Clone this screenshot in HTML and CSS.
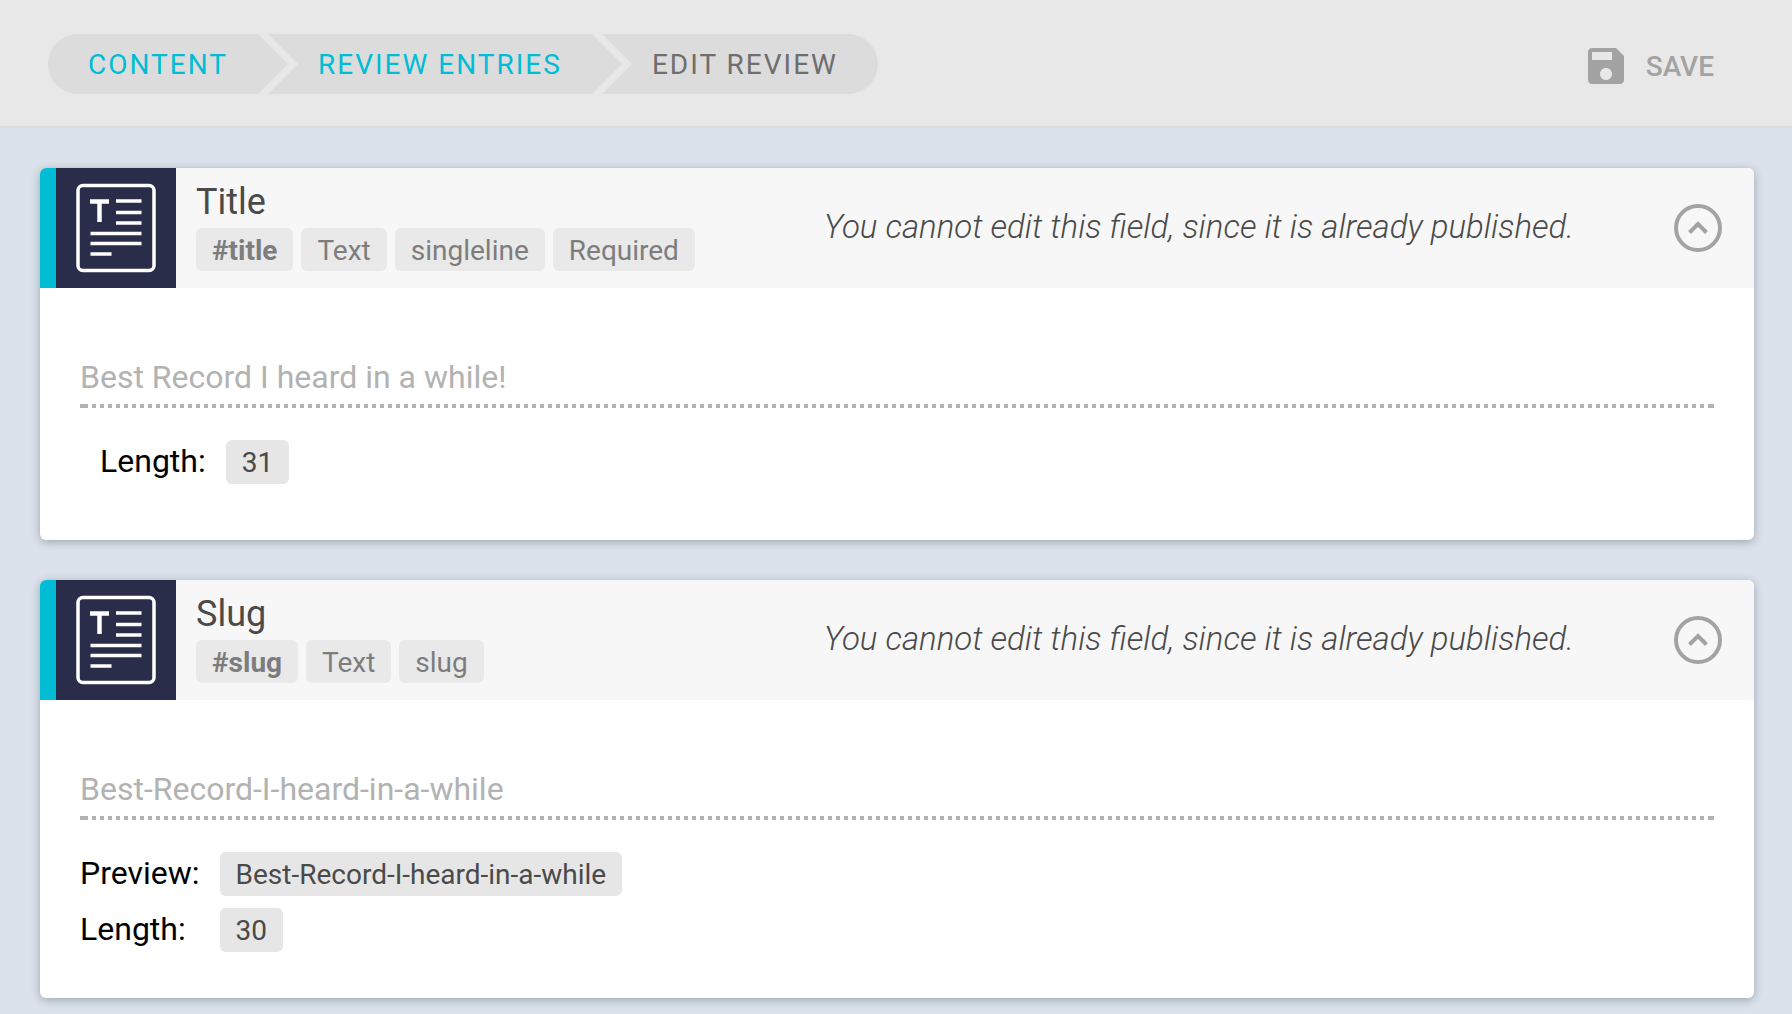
FILE: index.html
```html
<!DOCTYPE html>
<html lang="en">
<head>
<meta charset="utf-8">
<title>Edit Review</title>
<link rel="stylesheet" href="styles.css">
</head>
<body>
<svg class="sprite" aria-hidden="true">
  <symbol id="icon-text" viewBox="0 0 120 120">
    <rect x="22" y="17.5" width="76" height="85" rx="5" fill="none" stroke="#fff" stroke-width="3.5"/>
    <path d="M34 33.5h19M43.5 33v21" fill="none" stroke="#fff" stroke-width="4.5"/>
    <path d="M60 33h25.500M60 44.500h25.500M60 55h25.500M34.500 65.500h51M34.500 75.500h51M34.500 86h21" fill="none" stroke="#fff" stroke-width="3.500"/>
  </symbol>
  <symbol id="icon-chevron" viewBox="0 0 48 48">
    <circle cx="24" cy="24" r="22" fill="none" stroke="currentColor" stroke-width="4"/>
    <path d="M15.500 28.500L24 20l8.500 8.500" fill="none" stroke="currentColor" stroke-width="4"/>
  </symbol>
</svg>

<header class="topbar">
  <nav aria-label="Breadcrumb">
    <ol class="crumbs">
      <li class="crumb"><a href="#content">CONTENT</a></li>
      <li class="crumb"><a href="#entries">REVIEW ENTRIES</a></li>
      <li class="crumb" aria-current="page">EDIT REVIEW</li>
    </ol>
  </nav>
  <button class="save" type="button">
    <svg class="save-icon" viewBox="0 0 24 24" aria-hidden="true"><path fill="currentColor" d="M17 3H5c-1.110 0-2 .9-2 2v14c0 1.100.89 2 2 2h14c1.100 0 2-.9 2-2V7l-4-4zm-5 16c-1.660 0-3-1.340-3-3s1.340-3 3-3 3 1.340 3 3-1.340 3-3 3zm3-10H5V5h10v4z"/></svg>
    <span class="save-label">SAVE</span>
  </button>
</header>

<main class="fields">
  <section class="card">
    <div class="card-head">
      <div class="type"><svg viewBox="0 0 120 120" aria-hidden="true"><use href="#icon-text"/></svg></div>
      <div class="meta">
        <h2><label for="title">Title</label></h2>
        <ul class="tags">
          <li class="tag"><strong>#title</strong></li>
          <li class="tag">Text</li>
          <li class="tag">singleline</li>
          <li class="tag">Required</li>
        </ul>
      </div>
      <p class="note">You cannot edit this field, since it is already published.</p>
      <button class="toggle" type="button" aria-label="Collapse Title"><svg viewBox="0 0 48 48" aria-hidden="true"><use href="#icon-chevron"/></svg></button>
    </div>
    <div class="card-body">
      <input class="value" id="title" type="text" value="Best Record I heard in a while!" disabled>
      <dl class="facts facts-inset">
        <dt>Length:</dt><dd class="tag">31</dd>
      </dl>
    </div>
  </section>

  <section class="card">
    <div class="card-head">
      <div class="type"><svg viewBox="0 0 120 120" aria-hidden="true"><use href="#icon-text"/></svg></div>
      <div class="meta">
        <h2><label for="slug">Slug</label></h2>
        <ul class="tags">
          <li class="tag"><strong>#slug</strong></li>
          <li class="tag">Text</li>
          <li class="tag">slug</li>
        </ul>
      </div>
      <p class="note">You cannot edit this field, since it is already published.</p>
      <button class="toggle" type="button" aria-label="Collapse Slug"><svg viewBox="0 0 48 48" aria-hidden="true"><use href="#icon-chevron"/></svg></button>
    </div>
    <div class="card-body card-body-slug">
      <input class="value" id="slug" type="text" value="Best-Record-I-heard-in-a-while" disabled>
      <dl class="facts">
        <dt>Preview:</dt><dd class="tag">Best-Record-I-heard-in-a-while</dd>
        <dt>Length:</dt><dd class="tag">30</dd>
      </dl>
    </div>
  </section>
</main>
</body>
</html>
```
FILE: styles.css
```css
* { box-sizing: border-box; }

body {
  margin: 0;
  background: #dbe2eb;
  color: #000;
  font: 400 32px/38px Roboto, sans-serif;
}

h2, p, ol, ul, dl, dd { margin: 0; padding: 0; }
ol, ul { list-style: none; }
button { border: 0; padding: 0; background: none; font: inherit; color: #a3a3a3; cursor: pointer; }
svg { display: block; }
.sprite { position: absolute; width: 0; height: 0; }

.topbar {
  display: flex;
  justify-content: space-between;
  align-items: flex-start;
  padding: 34px 78px 32px 48px;
  background: #e8e8e8;
  border-bottom: 2px solid #dcdcdc;
}

.crumbs {
  display: flex;
  font-size: 28px;
  line-height: 58px;
  letter-spacing: 2px;
  color: #6e6e6e;
}
.crumb {
  padding: 2px 60px 0 50px;
  background: #dcdcdc;
  white-space: nowrap;
  clip-path: polygon(0 0, calc(100% - 30px) 0, 100% 50%, calc(100% - 30px) 100%, 0 100%, 30px 50%);
}
.crumb + .crumb { margin-left: -20px; }
.crumb:first-child {
  padding-left: 40px;
  border-radius: 30px 0 0 30px;
  clip-path: polygon(0 0, calc(100% - 30px) 0, 100% 50%, calc(100% - 30px) 100%, 0 100%);
}
.crumb:last-child {
  padding-right: 40px;
  border-radius: 0 30px 30px 0;
  clip-path: polygon(0 0, 100% 0, 100% 100%, 0 100%, 30px 50%);
}
.crumb a { color: #00bcd4; text-decoration: none; }

.save {
  display: flex;
  align-items: center;
  gap: 16px;
  height: 64px;
  margin-bottom: -4px;
  font-size: 28px;
  font-weight: 500;
}
.save-icon { width: 48px; height: 48px; }
.save-label { padding-top: 2px; }

.fields {
  display: flex;
  flex-direction: column;
  gap: 40px;
  padding: 40px 38px 16px 40px;
}

.card {
  border-radius: 6px;
  background: #fff;
  box-shadow: 0 2px 10px rgba(0, 30, 40, 0.3);
  overflow: hidden;
}
.card-head {
  display: flex;
  align-items: center;
  min-height: 120px;
  padding-right: 32px;
  border-left: 16px solid #00bcd4;
  background: #f7f7f7;
}
.type { flex: none; width: 120px; background: #2a2d4a; }
.meta { align-self: flex-start; padding: 12px 0 0 20px; }
.meta h2 {
  margin-bottom: 4px;
  color: #4a4a4a;
  font-size: 36px;
  font-weight: 400;
  line-height: 44px;
}
.tags { display: flex; gap: 8px; }
.tag {
  padding: 2px 16px 0;
  border-radius: 6px;
  background: #e6e6e6;
  color: #4a4a4a;
  font-size: 28px;
  line-height: 42px;
  white-space: nowrap;
}
.tags .tag { padding-top: 3px; background: #e9e9e9; color: #7d7d7d; line-height: 40px; }
.note {
  margin-left: auto;
  padding-bottom: 2px;
  color: #4a4a4a;
  font-size: 33px;
  font-style: italic;
  font-weight: 300;
}
.toggle { flex: none; width: 48px; height: 48px; margin-left: 100px; }

.card-body { padding: 70px 40px 56px; }
.card-body-slug { padding-bottom: 46px; }

.value {
  display: block;
  width: 100%;
  height: 50px;
  padding: 0 0 12px;
  border: 0;
  background:
    linear-gradient(#b2b2b2, #b2b2b2) 0 100% / 8px 4px no-repeat,
    linear-gradient(#b2b2b2, #b2b2b2) 100% 100% / 6px 4px no-repeat,
    repeating-linear-gradient(to right, transparent 0 4px, #b2b2b2 4px 8px) 0 100% / 100% 4px no-repeat;
  color: #b2b2b2;
  font: inherit;
}

.facts {
  display: grid;
  grid-template-columns: max-content max-content;
  justify-items: start;
  align-items: center;
  gap: 12px 20px;
  margin-top: 32px;
}
.facts dt { padding-bottom: 2px; }
.facts-inset { margin-left: 20px; }
```
